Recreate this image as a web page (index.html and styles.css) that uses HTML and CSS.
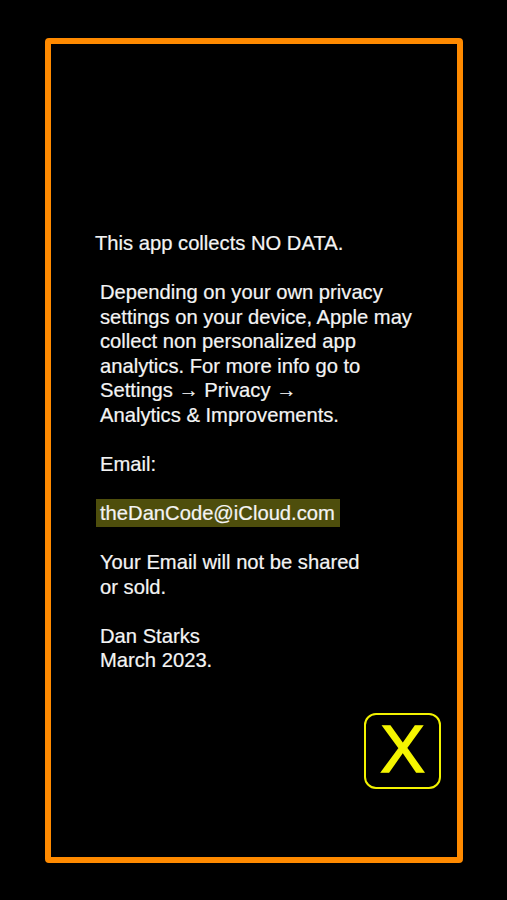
FILE: index.html
```html
<!DOCTYPE html>
<html>
<head>
<meta charset="utf-8">
<link rel="stylesheet" href="styles.css">
</head>
<body>
<div class="frame">
  <div class="text">
    <p class="lead">This app collects NO DATA.</p>
    <p>Depending on your own privacy<br>settings on your device, Apple may<br>collect non personalized app<br>analytics. For more info go to<br>Settings → Privacy →<br>Analytics &amp; Improvements.</p>
    <p>Email:</p>
    <p><span class="email">theDanCode@iCloud.com</span></p>
    <p>Your Email will not be shared<br>or sold.</p>
    <p>Dan Starks<br>March 2023.</p>
  </div>
  <div class="actions">
    <button class="close">X</button>
  </div>
</div>
</body>
</html>
```
FILE: styles.css
```css
html, body {
  margin: 0;
  padding: 0;
  background: #000;
}
body {
  width: 507px;
  height: 900px;
  padding: 38px 0 0 45px;
  box-sizing: border-box;
  font-family: "Liberation Sans", Arial, sans-serif;
}
.frame {
  width: 418px;
  height: 825px;
  box-sizing: border-box;
  border: 6px solid #ff8a00;
  border-radius: 4px;
  display: flex;
  flex-direction: column;
  padding: 187px 16px 68px 49px;
}
.text {
  color: #f4f4f4;
  font-size: 20.2px;
  line-height: 24.55px;
  -webkit-text-stroke: 0.2px #f4f4f4;
}
.text p {
  margin: 0 0 24.55px 0;
}
.text p:last-child {
  margin-bottom: 0;
}
.text .lead {
  margin-left: -5px;
}
.email {
  background: #4e4e0c;
  padding: 3px 5px 3px 4px;
  margin-left: -4px;
}
.actions {
  margin-top: auto;
  display: flex;
  justify-content: flex-end;
}
.close {
  width: 77px;
  height: 76px;
  box-sizing: border-box;
  border: 2.5px solid #f2f200;
  border-radius: 12px;
  background: #000;
  color: #f5f500;
  font-family: "Liberation Sans", Arial, sans-serif;
  font-size: 67px;
  line-height: 1;
  padding: 0 0 5px 0;
  -webkit-text-stroke: 1.5px #f5f500;
  display: flex;
  align-items: center;
  justify-content: center;
}
```
